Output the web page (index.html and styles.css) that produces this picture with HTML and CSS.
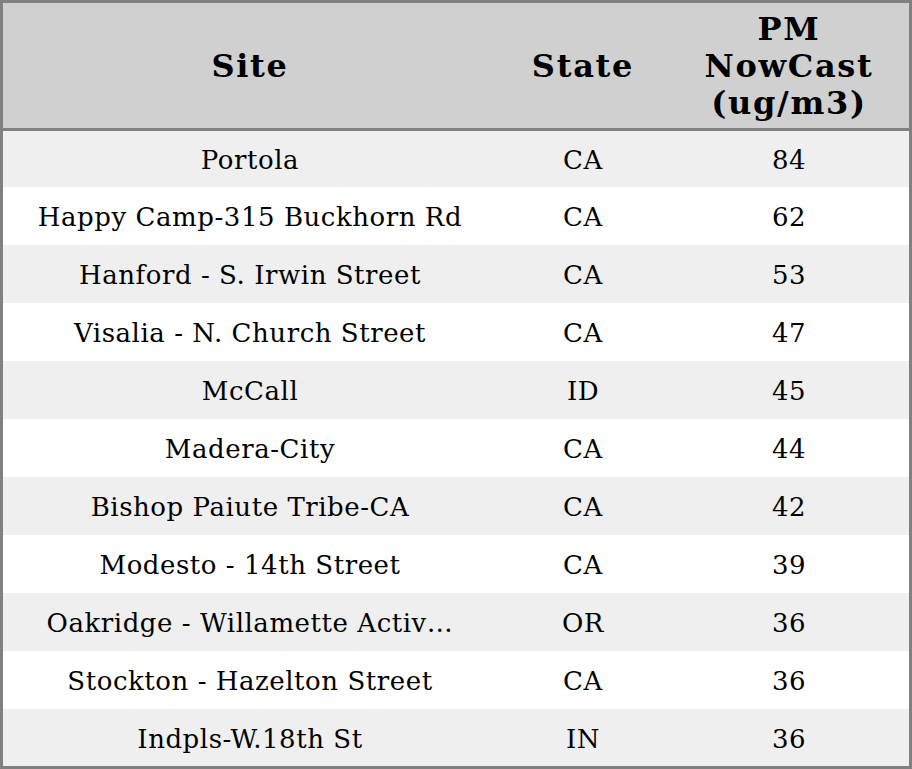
FILE: index.html
```html
<!DOCTYPE html>
<html>
<head>
<meta charset="utf-8">
<link rel="stylesheet" href="styles.css">
</head>
<body>
<table class="aq">
  <colgroup>
    <col class="c-site">
    <col class="c-state">
    <col class="c-pm">
  </colgroup>
  <thead>
    <tr><th>Site</th><th>State</th><th>PM<br>NowCast<br>(ug/m3)</th></tr>
  </thead>
  <tbody>
    <tr><td class="site">Portola</td><td>CA</td><td>84</td></tr>
    <tr><td class="site">Happy Camp-315 Buckhorn Rd</td><td>CA</td><td>62</td></tr>
    <tr><td class="site">Hanford - S. Irwin Street</td><td>CA</td><td>53</td></tr>
    <tr><td class="site">Visalia - N. Church Street</td><td>CA</td><td>47</td></tr>
    <tr><td class="site">McCall</td><td>ID</td><td>45</td></tr>
    <tr><td class="site">Madera-City</td><td>CA</td><td>44</td></tr>
    <tr><td class="site">Bishop Paiute Tribe-CA</td><td>CA</td><td>42</td></tr>
    <tr><td class="site">Modesto - 14th Street</td><td>CA</td><td>39</td></tr>
    <tr><td class="site">Oakridge - Willamette Activ…</td><td>OR</td><td>36</td></tr>
    <tr><td class="site">Stockton - Hazelton Street</td><td>CA</td><td>36</td></tr>
    <tr><td class="site">Indpls-W.18th St</td><td>IN</td><td>36</td></tr>
  </tbody>
</table>
</body>
</html>
```
FILE: styles.css
```css
html, body {
  margin: 0;
  padding: 0;
  background: #ffffff;
}
.aq {
  width: 912px;
  border-collapse: separate;
  border-spacing: 0;
  border: 3px solid #808080;
  box-sizing: border-box;
  table-layout: fixed;
  font-family: "DejaVu Serif", serif;
  color: #000;
}
.c-site { width: 494px; }
.c-state { width: 172px; }
.c-pm { width: 240px; }
.aq thead tr { height: 128px; }
.aq th {
  background: #d0d0d0;
  font-size: 32px;
  font-weight: bold;
  line-height: 37px;
  letter-spacing: 1.7px;
  padding: 2px 0 0;
  border-bottom: 3px solid #808080;
  text-align: center;
  vertical-align: middle;
}
.aq tbody tr { height: 58px; }
.aq tbody tr:first-child { height: 56px; }
.aq tbody tr:last-child { height: 57px; }
.aq td {
  font-size: 26px;
  line-height: 30px;
  letter-spacing: 0.55px;
  text-align: center;
  vertical-align: middle;
  padding: 2px 0 0;
  white-space: nowrap;
  overflow: hidden;
}
.aq tbody tr:nth-child(odd) td {
  background: #efefef;
}
```
